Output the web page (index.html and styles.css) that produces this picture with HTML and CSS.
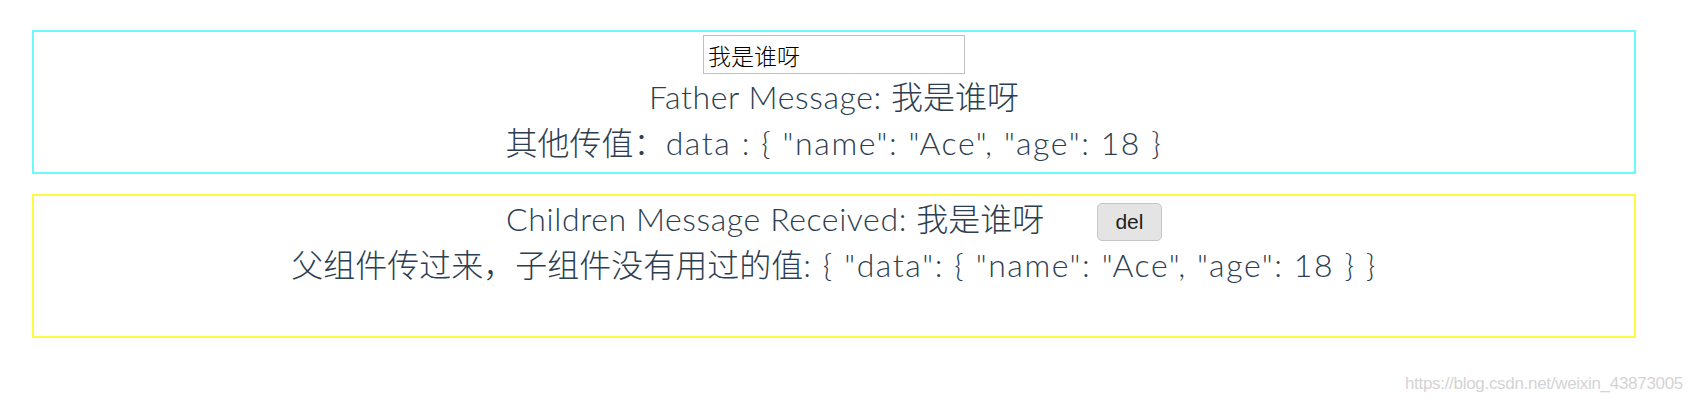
FILE: index.html
```html
<!DOCTYPE html>
<html lang="zh-CN">
<head>
<meta charset="utf-8">
<title>Father / Children</title>
<link rel="stylesheet" href="styles.css">
</head>
<body>
<div class="app">
  <div class="box father">
    <input class="msg-input" type="text" value="我是谁呀">
    <div class="line"><span class="word">Father Message: </span>我是谁呀</div>
    <div class="line">其他传值：<span class="json">data : { "name": "Ace", "age": 18 }</span></div>
  </div>
  <div class="box child">
    <div class="line"><span class="word">Children Message Received: </span>我是谁呀 <button class="del-btn">del</button></div>
    <div class="line">父组件传过来，子组件没有用过的值<span class="json">: { "data": { "name": "Ace", "age": 18 } }</span></div>
  </div>
  <div class="watermark">https://blog.csdn.net/weixin_43873005</div>
</div>
</body>
</html>
```
FILE: styles.css
```css
html, body {
  margin: 0;
  padding: 0;
  background: #ffffff;
}

.app {
  padding: 30px 0 0 32px;
  width: 1604px;
  font-family: "Lato", "Noto Sans CJK SC", sans-serif;
  color: #2c3e50;
  -webkit-font-smoothing: antialiased;
}

.box {
  box-sizing: border-box;
  height: 144px;
  display: flex;
  flex-direction: column;
  align-items: center;
  text-align: center;
}

.father {
  border: 2px solid #6df9f9;
}

.child {
  border: 2px solid #fdfa45;
  margin-top: 20px;
}

.msg-input {
  box-sizing: border-box;
  width: 262px;
  height: 39px;
  margin-top: 3px;
  padding: 0 4px;
  border: 1px solid #c0c0c0;
  font-family: "Noto Sans CJK SC", sans-serif;
  font-size: 23px;
  font-weight: 300;
  color: #000;
  background: #fff;
  outline: none;
}

.line {
  font-size: 32px;
  line-height: 46px;
  font-weight: 300;
  white-space: nowrap;
}

.word {
  letter-spacing: 0.6px;
}

.json {
  letter-spacing: 1.6px;
}

.del-btn {
  box-sizing: border-box;
  width: 65px;
  height: 38px;
  margin-left: 44px;
  vertical-align: 2px;
  padding: 0;
  border: 1px solid #c6c6c6;
  border-radius: 5px;
  background: #e4e4e4;
  color: #1e1e1e;
  font-family: "Liberation Sans", sans-serif;
  font-size: 21px;
  font-weight: 400;
  letter-spacing: 0;
}

.watermark {
  margin-top: 36px;
  margin-right: -47px;
  text-align: right;
  font-family: "Liberation Sans", sans-serif;
  font-size: 17px;
  color: #d4d4d4;
  letter-spacing: -0.3px;
}
```
